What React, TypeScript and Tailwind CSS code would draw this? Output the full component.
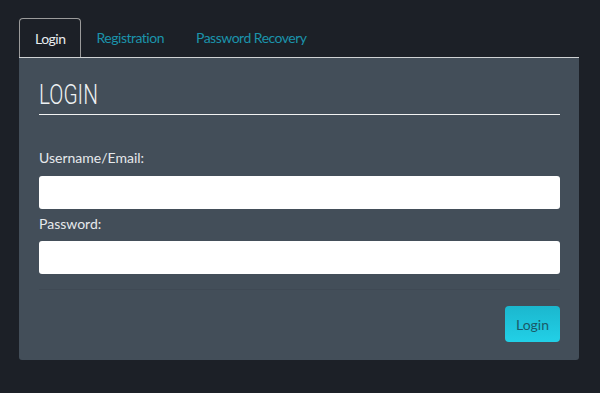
import React, { useState } from 'react';

type TabId = 'login' | 'register' | 'recover';

const TABS: { id: TabId; label: string }[] = [
  { id: 'login', label: 'Login' },
  { id: 'register', label: 'Registration' },
  { id: 'recover', label: 'Password Recovery' },
];

export default function App() {
  const [tab, setTab] = useState<TabId>('login');

  return (
    <div className="min-h-[393px] bg-[#1c2027] px-[19px] pt-[18px] font-['Lato','Liberation_Sans',sans-serif]">
      <div className="flex h-[39px] items-stretch">
        {TABS.map((t) =>
          t.id === tab ? (
            <button
              key={t.id}
              onClick={() => setTab(t.id)}
              className="flex items-center rounded-t-[4px] border border-b-0 border-[#9b9b9b] pl-[15px] pr-[14px] text-[14px] tracking-[-0.5px] text-[#e8ecef]"
            >
              {t.label}
            </button>
          ) : (
            <button
              key={t.id}
              onClick={() => setTab(t.id)}
              className="flex items-center px-4 text-[14px] tracking-[-0.5px] text-[#1b93ab]"
            >
              {t.label}
            </button>
          )
        )}
      </div>

      <div className="h-[303px] w-[560px] rounded-b-[3px] border-t border-[#cfd2d4] bg-[#434e59] pl-5 pr-[19px]">
        <h2 className="origin-left scale-x-[0.77] pt-[21px] font-['Roboto',sans-serif] text-[27px] font-light leading-[32px] text-[#eef1f3]">
          LOGIN
        </h2>
        <div className="mt-[3px] h-px bg-[#f2f2f2]" />

        <label className="mt-[34px] block text-[14px] leading-[18px] text-[#e6e9ec]">Username/Email:</label>
        <input type="text" className="mt-[9px] block h-[33px] w-full rounded-[3px] bg-white px-2 text-sm outline-none" />

        <label className="mt-[3px] block text-[14px] leading-[24px] text-[#e6e9ec]">Password:</label>
        <input type="password" className="mt-[5px] block h-[33px] w-full rounded-[3px] bg-white px-2 text-sm outline-none" />

        <div className="mt-[15px] h-px bg-[#3f4954]" />

        <div className="mt-[16px] flex justify-end">
          <button className="h-[36px] w-[55px] rounded-[4px] bg-gradient-to-b from-[#1bb7ce] to-[#22d0e7] text-[14px] text-[#1a5a68]">
            Login
          </button>
        </div>
      </div>
    </div>
  );
}
